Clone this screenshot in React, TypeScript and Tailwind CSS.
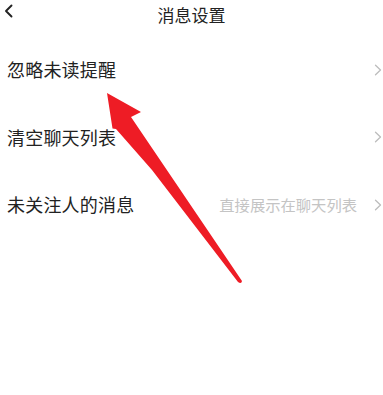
import React from 'react'

const rows = [
  { label: '忽略未读提醒', value: '' },
  { label: '清空聊天列表', value: '' },
  { label: '未关注人的消息', value: '直接展示在聊天列表' },
]

function Chevron({ className }: { className?: string }) {
  return (
    <svg width="8" height="12" viewBox="0 0 8 12" fill="none" className={className}>
      <path d="M1.5 1.2 L6.5 6 L1.5 10.8" stroke="currentColor" strokeWidth="1.3" strokeLinecap="round" strokeLinejoin="round" />
    </svg>
  )
}

export default function App() {
  return (
    <div
      className="relative w-[383px] h-[395px] bg-white overflow-hidden"
      style={{ fontFamily: '"Noto Sans CJK SC", "Noto Sans", sans-serif' }}
    >
      <div className="relative h-[36px] flex items-start">
        <button className="absolute left-[4px] top-[4px] text-[#222]">
          <svg width="10" height="14" viewBox="0 0 10 14" fill="none">
            <path d="M7.5 1.5 L2 7 L7.5 12.5" stroke="currentColor" strokeWidth="1.9" strokeLinecap="round" strokeLinejoin="round" />
          </svg>
        </button>
        <h1 className="w-full text-center text-[17px] leading-[30px] text-[#222]">消息设置</h1>
      </div>

      <ul>
        {rows.map((r) => (
          <li key={r.label} className="h-[67.5px] flex items-center justify-between pl-[7px] pr-[1px]">
            <span className="text-[18px] text-[#222] tracking-[0.2px]">{r.label}</span>
            <div className="flex items-center gap-[17px]">
              {r.value && <span className="text-[15.3px] text-[#c4c4c4]">{r.value}</span>}
              <Chevron className="text-[#bdbdbd]" />
            </div>
          </li>
        ))}
      </ul>

      {/* red annotation arrow */}
      <svg className="absolute inset-0 pointer-events-none" width="383" height="395" viewBox="0 0 383 395">
        <path
          d="M107 93 L141 112 L131 117 L242 281 Q241.5 284.5 238 282 L152 170 L116 129 L112.5 128.5 Z"
          fill="#ee1c25"
        />
      </svg>
    </div>
  )
}
